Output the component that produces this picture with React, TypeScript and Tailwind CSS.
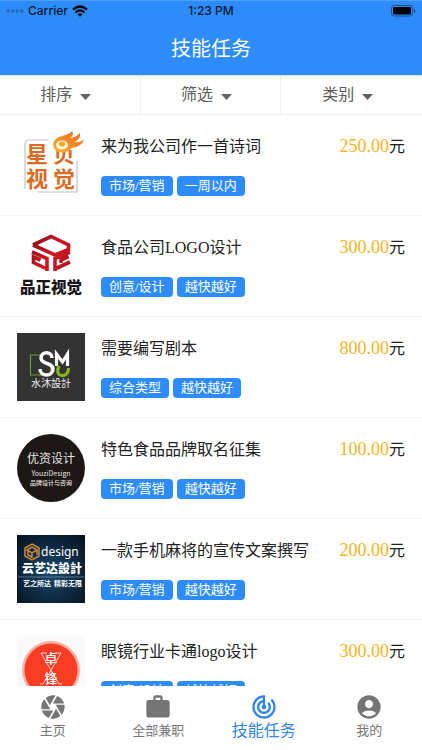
import type { ReactNode } from "react";
import { MdAccountCircle, MdCamera, MdTrackChanges, MdWork } from "react-icons/md";

const sans = "Noto Sans CJK SC, sans-serif";

function StarShellLogo() {
  return (
    <svg viewBox="0 0 68 68" className="size-full" aria-hidden="true">
      <defs>
        <linearGradient id="flame" x1="0" y1="1" x2="1" y2="0">
          <stop offset="0" stopColor="#f9b233" />
          <stop offset="1" stopColor="#e8641b" />
        </linearGradient>
      </defs>
      <path d="M8 58V13q0-4 4-4h19M60 30v31H21" fill="none" stroke="#c4c4c4" strokeWidth="1.2" />
      <g fontFamily={sans} fontWeight="700" fontSize="22" fill="#dd6a22">
        <text x="9" y="31">星</text>
        <text x="36" y="31">贝</text>
        <text x="9" y="56">视</text>
        <text x="36" y="56">觉</text>
      </g>
      <path d="M35 0h32v12L57 19H35z" fill="#fff" />
      <path
        d="M37 17C34 8 42 6 48 4c5-1 7-4 7-4 2 3 0 6-2 7 5 0 9-4 10-5 1 5-3 8-6 9 4 1 7-1 10-2-3 7-9 7-12 8-4 5-14 7-18 0z"
        fill="url(#flame)"
      />
      <ellipse cx="45" cy="14" rx="6" ry="4.5" fill="#fff3d0" />
      <ellipse cx="45" cy="13" rx="3" ry="2.4" fill="#f5a623" />
    </svg>
  );
}

function PinzhengLogo() {
  return (
    <svg viewBox="0 0 68 68" className="size-full" aria-hidden="true">
      <defs>
        <linearGradient id="cube" x1="0" y1="0" x2="68" y2="45" gradientUnits="userSpaceOnUse">
          <stop offset="0.2" stopColor="#8d0f17" />
          <stop offset="0.5" stopColor="#d01824" />
          <stop offset="0.8" stopColor="#b3121c" />
        </linearGradient>
      </defs>
      <g fill="none" stroke="url(#cube)" strokeWidth="3.600">
        <path d="M16 13l18-8.500L51.500 13v4.500L38 23 16 13" />
        <path d="M15 20l15 6.500V39M29 36.500l-12.500-6V25l7 3" />
        <path d="M53 20l-15 6.500V39M39 36.500l14-6.500M51.500 24.500L44 28v3" />
      </g>
      <text x="34" y="61" textAnchor="middle" fontFamily={sans} fontWeight="900" fontSize="15.500" fill="#171418">
        品正视觉
      </text>
    </svg>
  );
}

function ShuimuLogo() {
  return (
    <svg viewBox="0 0 68 68" className="size-full" aria-hidden="true">
      <path d="M0 0h68v68H0z" fill="#333" />
      <path d="M24 22H13.500v20h20V32" fill="none" stroke="#719d23" strokeWidth="1.2" />
      <path d="M35 25c0-7-11-7-11 0 0 7 12 4 12 11 0 8-13 8-13 0" fill="none" stroke="#fff" strokeWidth="3.500" />
      <path d="M39.500 33V21l6 8 5-8v12" fill="none" stroke="#fff" strokeWidth="3.200" />
      <path d="M42 33c-3 7 0 10 4 9.500 4-.5 5.500-4 5.500-7.500" fill="none" stroke="#83b51f" strokeWidth="3.200" />
      <text x="34" y="54" textAnchor="middle" fontFamily={sans} fontSize="10" fill="#eee">
        水沐設計
      </text>
    </svg>
  );
}

function YouziLogo() {
  return (
    <svg viewBox="0 0 68 68" className="size-full" aria-hidden="true">
      <circle cx="34" cy="34" r="34" fill="#1d1715" />
      <g textAnchor="middle" fill="#e8e5e2" fontFamily={sans}>
        <text x="34" y="29" fontSize="12">优资设计</text>
        <text x="34" y="42" fontSize="7">YouziDesign</text>
        <text x="34" y="51" fontSize="6" fontWeight="500">品牌设计与咨询</text>
      </g>
    </svg>
  );
}

function YunyidaLogo() {
  return (
    <svg viewBox="0 0 68 68" className="size-full" aria-hidden="true">
      <defs>
        <radialGradient id="night" cx="0.5" cy="0.55" r="0.7">
          <stop offset="0" stopColor="#164a6b" />
          <stop offset="0.6" stopColor="#0d2740" />
          <stop offset="1" stopColor="#07131f" />
        </radialGradient>
      </defs>
      <path d="M0 0h68v68H0z" fill="url(#night)" />
      <g fill="none" stroke="#d08a3c" strokeWidth="1.500">
        <path d="M15 9l7 4v8l-7 4-7-4v-8z" />
        <path d="M10 15l5-3 5 3-5 3zM15 18v5M11 16v4l4 2M20 16v4" />
      </g>
      <g fill="#fff" fontFamily={sans}>
        <text x="24" y="21" fontSize="12" fontFamily="Noto Sans, sans-serif">design</text>
        <text x="35" y="38" fontSize="12" fontWeight="900" textAnchor="middle">云艺达設計</text>
        <text x="6" y="51" fontSize="7" fontWeight="700">艺之所达</text>
        <text x="37" y="51" fontSize="7" fontWeight="700">精彩无限</text>
      </g>
      <path d="M1 42h66" stroke="#8ba5b8" strokeWidth="0.600" />
    </svg>
  );
}

function ZhuofengLogo() {
  return (
    <svg viewBox="0 0 68 68" className="size-full" aria-hidden="true">
      <path d="M0 0h68v68H0z" fill="#fbfafa" />
      <circle cx="34" cy="34" r="29" fill="#fbaea3" />
      <circle cx="34" cy="34" r="26.500" fill="#f93d24" />
      <path d="M30 17h-6l18 31h3M38 17h6L26 48h-3" fill="none" stroke="#ffd5ce" strokeWidth="1" />
      <g fill="#fff" textAnchor="middle" fontFamily="Noto Sans CJK SC, serif" fontSize="13" fontWeight="500">
        <text x="34" y="27">卓</text>
        <text x="34" y="47">锋</text>
      </g>
    </svg>
  );
}

type Task = { title: string; price: string; tags: string[]; logo: ReactNode };

const tasks: Task[] = [
  { title: "来为我公司作一首诗词", price: "250.00", tags: ["市场/营销", "一周以内"], logo: <StarShellLogo /> },
  { title: "食品公司LOGO设计", price: "300.00", tags: ["创意/设计", "越快越好"], logo: <PinzhengLogo /> },
  { title: "需要编写剧本", price: "800.00", tags: ["综合类型", "越快越好"], logo: <ShuimuLogo /> },
  { title: "特色食品品牌取名征集", price: "100.00", tags: ["市场/营销", "越快越好"], logo: <YouziLogo /> },
  { title: "一款手机麻将的宣传文案撰写", price: "200.00", tags: ["市场/营销", "越快越好"], logo: <YunyidaLogo /> },
  { title: "眼镜行业卡通logo设计", price: "300.00", tags: ["创意/设计", "越快越好"], logo: <ZhuofengLogo /> },
];

const tabs = [
  { label: "主页", Icon: MdCamera, active: false },
  { label: "全部兼职", Icon: MdWork, active: false },
  { label: "技能任务", Icon: MdTrackChanges, active: true },
  { label: "我的", Icon: MdAccountCircle, active: false },
];

function StatusBar() {
  return (
    <div className="grid h-5 grid-cols-3 items-center px-1.5 font-['Inter',sans-serif] text-xs font-medium text-[#06182c]">
      <div className="flex items-center gap-1">
        <svg viewBox="0 0 18 4" className="h-1 w-[18px]" fill="#2468b5" aria-hidden="true">
          <circle cx="2" cy="2" r="1.700" />
          <circle cx="6.600" cy="2" r="1.700" />
          <circle cx="11.200" cy="2" r="1.700" />
          <circle cx="15.800" cy="2" r="1.700" />
        </svg>
        <span>Carrier</span>
        <svg viewBox="0 0 16 12" className="h-3 w-4" fill="none" stroke="#000" strokeWidth="2.200" aria-hidden="true">
          <path d="M1 4.500q7-6 14 0M3.500 7.300q4.500-3.800 9 0" />
          <path d="M5.500 9.200q2.500-2 5 0L8 11.700z" fill="#000" stroke="none" />
        </svg>
      </div>
      <span className="text-center">1:23 PM</span>
      <svg viewBox="0 0 25 12" className="h-3 w-[25px] justify-self-end" aria-hidden="true">
        <rect x="0.500" y="0.500" width="21" height="10.500" rx="2.500" fill="none" stroke="#174f8f" />
        <rect x="2" y="2" width="18" height="7.500" rx="1" fill="#000" />
        <path d="M23 4v4q1.500-.5 1.500-2T23 4z" fill="#174f8f" />
      </svg>
    </div>
  );
}

export default function App() {
  return (
    <div className="flex h-screen flex-col bg-white font-['Liberation_Serif','Noto_Sans_CJK_SC',sans-serif] text-[#222]">
      <header className="z-10 shrink-0 border-t border-[#4da0fb] bg-[#2d8cfa] shadow-sm">
        <StatusBar />
        <h1 className="flex h-[54px] items-center justify-center pt-0.5 text-xl text-white">技能任务</h1>
      </header>

      <div className="grid h-10 shrink-0 grid-cols-3 divide-x divide-[#f1f1f1] border-b border-[#efefef] text-[#5c5c5c]">
        {["排序", "筛选", "类别"].map((label) => (
          <button key={label} type="button" className="flex items-center justify-center gap-2 pr-2 text-base">
            {label}
            <svg viewBox="0 0 11 6" className="mt-1 h-1.5 w-[11px]" fill="#606164" aria-hidden="true">
              <path d="M0 0h11L5.500 6z" />
            </svg>
          </button>
        ))}
      </div>

      <main className="min-h-0 flex-1 overflow-hidden">
        <ul>
          {tasks.map((task) => (
            <li key={task.title} className="flex gap-4 border-b border-[#f5f5f5] px-[17px] py-4">
              <div className="size-[68px] shrink-0">{task.logo}</div>
              <div className="flex min-w-0 flex-1 flex-col justify-between pb-[3px]">
                <div className="flex items-center justify-between">
                  <h2 className="text-base leading-[30px]">{task.title}</h2>
                  <p className="shrink-0 text-base leading-[30px]">
                    <span className="text-lg leading-[30px] text-[#f8b31c]">{task.price}</span>元
                  </p>
                </div>
                <div className="flex gap-1">
                  {task.tags.map((tag) => (
                    <span key={tag} className="rounded-sm bg-[#2d8cfa] px-2 text-[13px] leading-5 text-white">
                      {tag}
                    </span>
                  ))}
                </div>
              </div>
            </li>
          ))}
        </ul>
      </main>

      <nav className="grid h-16 shrink-0 grid-cols-4 bg-white">
        {tabs.map(({ label, Icon, active }) =>
          active ? (
            <a key={label} href="#" aria-current="page" className="flex flex-col items-center pt-[7px] text-[#2f86ea]">
              <Icon className="size-7" />
              <span className="text-base leading-5">{label}</span>
            </a>
          ) : (
            <a key={label} href="#" className="flex flex-col items-center pt-[7px] text-[#757575]">
              <Icon className="size-7" />
              <span className="text-[13px] leading-5">{label}</span>
            </a>
          ),
        )}
      </nav>
    </div>
  );
}
